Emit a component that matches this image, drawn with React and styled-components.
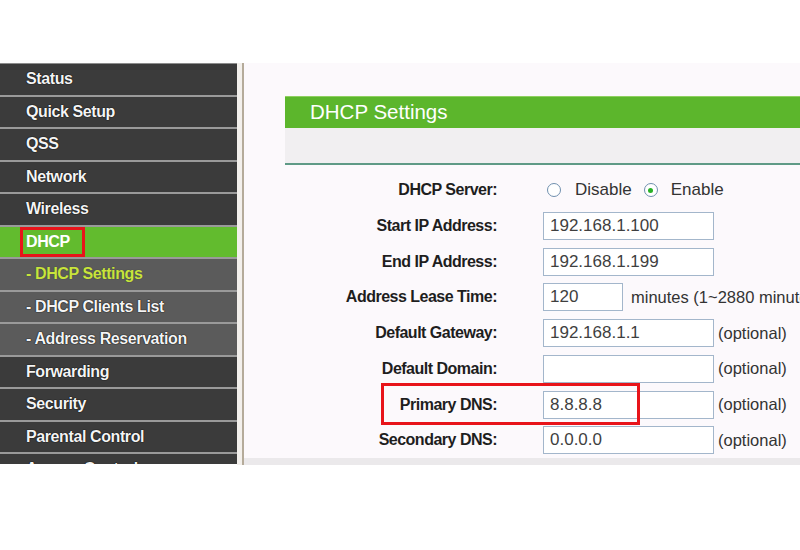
import React from "react";
import styled, { createGlobalStyle, css } from "styled-components";

const Global = createGlobalStyle`
  html, body {
    margin: 0;
    padding: 0;
    background: #ffffff;
    font-family: "Liberation Sans", Arial, sans-serif;
  }
`;

const Frame = styled.div`
  margin-top: 63px;
  height: 402px;
  width: 800px;
  display: flex;
  overflow: hidden;
`;

const Sidebar = styled.nav`
  width: 237px;
  flex: none;
  height: 400px;
  overflow: hidden;
  background: #3a3a3a;
  border-top: 1px solid #8c8c8c;
`;

const MenuItem = styled.div`
  height: 30.5px;
  border-bottom: 2px solid #9a9a9a;
  display: flex;
  align-items: center;
  padding-left: 26px;
  font-size: 16px;
  font-weight: bold;
  letter-spacing: -0.4px;
  color: #f4f4f4;
  text-shadow: 0 0 1px #000, 0 0 1px #000;
  background: #3b3b3b;
  white-space: nowrap;

  ${props =>
    props.sub &&
    css`
      background: #5b5b5b;
    `}
  ${props =>
    props.active &&
    css`
      background: #62bb2e;
      text-shadow: none;
      color: #ffffff;
    `}
  ${props =>
    props.current &&
    css`
      color: #c8e43c;
      text-shadow: 0 0 1px #333;
    `}
`;

const Marked = styled.span`
  display: inline-flex;
  align-items: center;
  height: 30px;
  box-sizing: border-box;
  margin-left: -6px;
  padding: 0 12px 0 3px;
  border: 3px solid #e8141a;
`;

const Divider = styled.div`
  width: 5px;
  flex: none;
  background: #f3f0ec;
  border-right: 2px solid #b5ab9a;
`;

const Content = styled.main`
  flex: 1;
  background: #fcf9fc;
  padding-left: 41px;
  display: flex;
  flex-direction: column;
  position: relative;
`;

const TitleBar = styled.div`
  margin-top: 33px;
  height: 32px;
  background: #5cb62c;
  border-top: 1px solid #8fd060;
  box-sizing: border-box;
  display: flex;
  align-items: center;
  padding-left: 25px;
  color: #ffffff;
  font-size: 20.5px;
`;

const Band = styled.div`
  height: 35px;
  background: #f1eff1;
  border-bottom: 2px solid #5f9a86;
`;

const Form = styled.div`
  margin-top: 8px;
  display: flex;
  flex-direction: column;
`;

const Row = styled.div`
  height: 35.7px;
  display: grid;
  grid-template-columns: 212px 1fr;
  column-gap: 46px;
  align-items: center;
  position: relative;
`;

const Label = styled.div`
  text-align: right;
  font-weight: bold;
  font-size: 16px;
  letter-spacing: -0.5px;
  color: #1e1e1e;
  white-space: nowrap;
`;

const Control = styled.div`
  display: flex;
  align-items: center;
  white-space: nowrap;
  font-size: 17px;
  color: #333;
`;

const Input = styled.div`
  width: ${props => props.width || 171}px;
  height: 28px;
  box-sizing: border-box;
  border: 1.5px solid #a3b6cb;
  background: #fff;
  display: flex;
  align-items: center;
  padding-left: 6px;
  font-size: 17px;
  color: #3f3f3f;
  flex: none;
`;

const Note = styled.span`
  margin-left: ${props => props.gap || 4}px;
  font-size: 16.5px;
  color: #333;
`;

const Radio = styled.span`
  width: 14px;
  height: 14px;
  box-sizing: border-box;
  border-radius: 50%;
  border: 1.5px solid #6f8fae;
  background: #fff;
  margin: ${props => (props.first ? "0 14px 0 4px" : "0 13px 0 12px")};
  display: inline-flex;
  align-items: center;
  justify-content: center;
  &::after {
    content: "";
    width: 5px;
    height: 5px;
    border-radius: 50%;
    background: ${props => (props.checked ? "#27b027" : "transparent")};
  }
`;

const Highlight = styled.div`
  position: absolute;
  left: 96px;
  top: -3.5px;
  width: 259px;
  height: 42px;
  box-sizing: border-box;
  border: 3px solid #e8141a;
  pointer-events: none;
`;

const Footer = styled.div`
  margin-top: auto;
  height: 7px;
  background: #ebe9eb;
  margin-left: -41px;
`;

const menu = [
  { label: "Status" },
  { label: "Quick Setup" },
  { label: "QSS" },
  { label: "Network" },
  { label: "Wireless" },
  { label: "DHCP", active: true },
  { label: "- DHCP Settings", sub: true, current: true },
  { label: "- DHCP Clients List", sub: true },
  { label: "- Address Reservation", sub: true },
  { label: "Forwarding" },
  { label: "Security" },
  { label: "Parental Control" },
  { label: "Access Control" }
];

const fields = [
  { label: "Start IP Address:", value: "192.168.1.100" },
  { label: "End IP Address:", value: "192.168.1.199" },
  { label: "Address Lease Time:", value: "120", width: 80, note: "minutes (1~2880 minutes)", gap: 8 },
  { label: "Default Gateway:", value: "192.168.1.1", note: "(optional)" },
  { label: "Default Domain:", value: "", note: "(optional)" },
  { label: "Primary DNS:", value: "8.8.8.8", note: "(optional)", marked: true },
  { label: "Secondary DNS:", value: "0.0.0.0", note: "(optional)" }
];

export default function App() {
  return (
    <>
      <Global />
      <Frame>
        <Sidebar>
          {menu.map(item => (
            <MenuItem
              key={item.label}
              sub={item.sub}
              active={item.active}
              current={item.current}
            >
              {item.active ? <Marked>{item.label}</Marked> : item.label}
            </MenuItem>
          ))}
        </Sidebar>
        <Divider />
        <Content>
          <TitleBar>DHCP Settings</TitleBar>
          <Band />
          <Form>
            <Row>
              <Label>DHCP Server:</Label>
              <Control>
                <Radio first />
                Disable
                <Radio checked />
                Enable
              </Control>
            </Row>
            {fields.map(f => (
              <Row key={f.label}>
                <Label>{f.label}</Label>
                <Control>
                  <Input width={f.width}>{f.value}</Input>
                  {f.note && <Note gap={f.gap}>{f.note}</Note>}
                </Control>
                {f.marked && <Highlight />}
              </Row>
            ))}
          </Form>
          <Footer />
        </Content>
      </Frame>
    </>
  );
}
